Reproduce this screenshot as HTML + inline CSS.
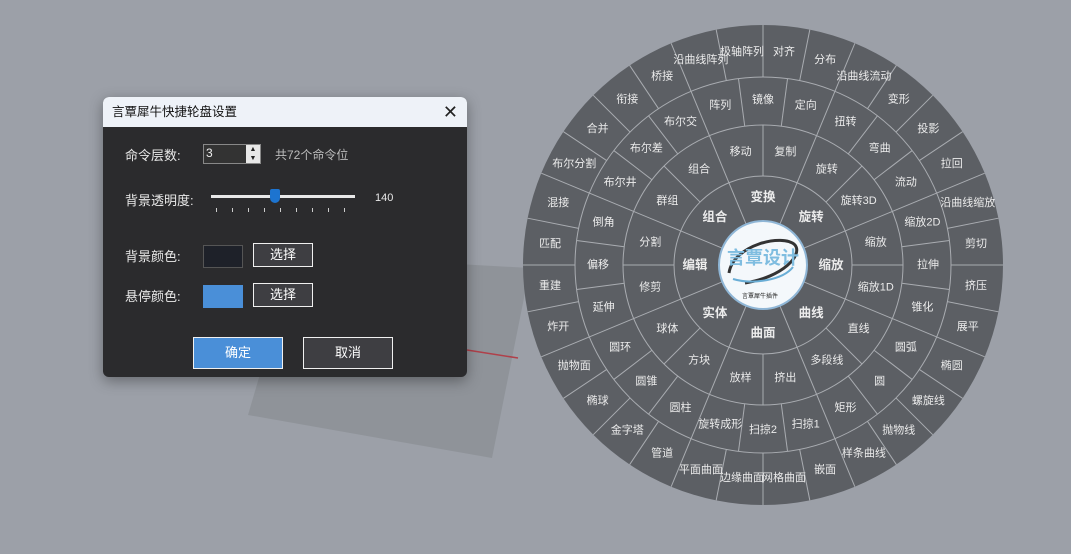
<!DOCTYPE html>
<html><head><meta charset="utf-8"><style>
body{margin:0;width:1071px;height:554px;overflow:hidden;background:#9ca0a8;font-family:"Liberation Sans","Noto Sans CJK SC",sans-serif;position:relative}
.dlg{position:absolute;left:103px;top:97px;width:364px;height:280px;background:#2b2b2d;border-radius:6px;overflow:hidden;box-shadow:0 4px 14px rgba(0,0,0,.35)}
.tb{height:30px;background:#eef2f8;color:#111;font-size:12.5px;line-height:30px;padding-left:9px;position:relative}
.x{position:absolute;right:9px;top:0;font-size:18px;color:#222}
.lbl{position:absolute;color:#e8e8e8;font-size:13px}
.btn{position:absolute;border:1.5px solid #f0f0f0;background:#3e3e42;color:#fff;font-size:13px;text-align:center;box-sizing:border-box}
</style></head><body>
<svg width="1071" height="554" style="position:absolute;left:0;top:0">
<polygon points="295,255 530,268 492,458 248,415" fill="#8f9399"/>
<line x1="467" y1="350" x2="518" y2="358" stroke="#b0404a" stroke-width="1.5"/>
<g transform="translate(763,265)" stroke="#a9acb1" stroke-width="1" fill="none">
<circle r="240" fill="#5c5f64" stroke="none"/>
<circle r="188"/><circle r="140"/><circle r="89"/>
<g id="l4"><line x1="0" y1="-188" x2="0" y2="-240"/></g>
<use href="#l4" transform="rotate(11.25)"/><use href="#l4" transform="rotate(22.5)"/><use href="#l4" transform="rotate(33.75)"/><use href="#l4" transform="rotate(45)"/><use href="#l4" transform="rotate(56.25)"/><use href="#l4" transform="rotate(67.5)"/><use href="#l4" transform="rotate(78.75)"/><use href="#l4" transform="rotate(90)"/><use href="#l4" transform="rotate(101.25)"/><use href="#l4" transform="rotate(112.5)"/><use href="#l4" transform="rotate(123.75)"/><use href="#l4" transform="rotate(135)"/><use href="#l4" transform="rotate(146.25)"/><use href="#l4" transform="rotate(157.5)"/><use href="#l4" transform="rotate(168.75)"/><use href="#l4" transform="rotate(180)"/><use href="#l4" transform="rotate(191.25)"/><use href="#l4" transform="rotate(202.5)"/><use href="#l4" transform="rotate(213.75)"/><use href="#l4" transform="rotate(225)"/><use href="#l4" transform="rotate(236.25)"/><use href="#l4" transform="rotate(247.5)"/><use href="#l4" transform="rotate(258.75)"/><use href="#l4" transform="rotate(270)"/><use href="#l4" transform="rotate(281.25)"/><use href="#l4" transform="rotate(292.5)"/><use href="#l4" transform="rotate(303.75)"/><use href="#l4" transform="rotate(315)"/><use href="#l4" transform="rotate(326.25)"/><use href="#l4" transform="rotate(337.5)"/><use href="#l4" transform="rotate(348.75)"/>
<g id="l3"><line x1="0" y1="-140" x2="0" y2="-188" transform="rotate(7.5)"/></g>
<use href="#l3" transform="rotate(15)"/><use href="#l3" transform="rotate(30)"/><use href="#l3" transform="rotate(45)"/><use href="#l3" transform="rotate(60)"/><use href="#l3" transform="rotate(75)"/><use href="#l3" transform="rotate(90)"/><use href="#l3" transform="rotate(105)"/><use href="#l3" transform="rotate(120)"/><use href="#l3" transform="rotate(135)"/><use href="#l3" transform="rotate(150)"/><use href="#l3" transform="rotate(165)"/><use href="#l3" transform="rotate(180)"/><use href="#l3" transform="rotate(195)"/><use href="#l3" transform="rotate(210)"/><use href="#l3" transform="rotate(225)"/><use href="#l3" transform="rotate(240)"/><use href="#l3" transform="rotate(255)"/><use href="#l3" transform="rotate(270)"/><use href="#l3" transform="rotate(285)"/><use href="#l3" transform="rotate(300)"/><use href="#l3" transform="rotate(315)"/><use href="#l3" transform="rotate(330)"/><use href="#l3" transform="rotate(345)"/>
<g id="l2"><line x1="0" y1="-89" x2="0" y2="-140"/></g>
<use href="#l2" transform="rotate(22.5)"/><use href="#l2" transform="rotate(45)"/><use href="#l2" transform="rotate(67.5)"/><use href="#l2" transform="rotate(90)"/><use href="#l2" transform="rotate(112.5)"/><use href="#l2" transform="rotate(135)"/><use href="#l2" transform="rotate(157.5)"/><use href="#l2" transform="rotate(180)"/><use href="#l2" transform="rotate(202.5)"/><use href="#l2" transform="rotate(225)"/><use href="#l2" transform="rotate(247.5)"/><use href="#l2" transform="rotate(270)"/><use href="#l2" transform="rotate(292.5)"/><use href="#l2" transform="rotate(315)"/><use href="#l2" transform="rotate(337.5)"/>
<g id="l1"><line x1="0" y1="-44" x2="0" y2="-89" transform="rotate(22.5)"/></g>
<use href="#l1" transform="rotate(45)"/><use href="#l1" transform="rotate(90)"/><use href="#l1" transform="rotate(135)"/><use href="#l1" transform="rotate(180)"/><use href="#l1" transform="rotate(225)"/><use href="#l1" transform="rotate(270)"/><use href="#l1" transform="rotate(315)"/>
<circle r="44" fill="#f4f8fb" stroke="#8fb6d6" stroke-width="2"/>
<path d="M-34,8 C-30,-20 20,-32 32,-20 C40,-10 20,12 -18,18" stroke="#333" stroke-width="3"/>
<path d="M-30,14 C-10,20 20,15 30,2" stroke="#6aaed6" stroke-width="2"/>
</g>
<g fill="#ececec" font-size="11" text-anchor="middle" dominant-baseline="central" font-family="Liberation Sans,Noto Sans CJK SC,sans-serif">
<g font-size="12.5" font-weight="bold">
<text transform="translate(763,265) rotate(0) translate(0,-68) rotate(0)">变换</text>
<text transform="translate(763,265) rotate(45) translate(0,-68) rotate(-45)">旋转</text>
<text transform="translate(763,265) rotate(90) translate(0,-68) rotate(-90)">缩放</text>
<text transform="translate(763,265) rotate(135) translate(0,-68) rotate(-135)">曲线</text>
<text transform="translate(763,265) rotate(180) translate(0,-68) rotate(-180)">曲面</text>
<text transform="translate(763,265) rotate(225) translate(0,-68) rotate(-225)">实体</text>
<text transform="translate(763,265) rotate(270) translate(0,-68) rotate(-270)">编辑</text>
<text transform="translate(763,265) rotate(315) translate(0,-68) rotate(-315)">组合</text>
</g>
<text transform="translate(763,265) rotate(11.25) translate(0,-115) rotate(-11.25)">复制</text>
<text transform="translate(763,265) rotate(33.75) translate(0,-115) rotate(-33.75)">旋转</text>
<text transform="translate(763,265) rotate(56.25) translate(0,-115) rotate(-56.25)">旋转3D</text>
<text transform="translate(763,265) rotate(78.75) translate(0,-115) rotate(-78.75)">缩放</text>
<text transform="translate(763,265) rotate(101.25) translate(0,-115) rotate(-101.25)">缩放1D</text>
<text transform="translate(763,265) rotate(123.75) translate(0,-115) rotate(-123.75)">直线</text>
<text transform="translate(763,265) rotate(146.25) translate(0,-115) rotate(-146.25)">多段线</text>
<text transform="translate(763,265) rotate(168.75) translate(0,-115) rotate(-168.75)">挤出</text>
<text transform="translate(763,265) rotate(191.25) translate(0,-115) rotate(-191.25)">放样</text>
<text transform="translate(763,265) rotate(213.75) translate(0,-115) rotate(-213.75)">方块</text>
<text transform="translate(763,265) rotate(236.25) translate(0,-115) rotate(-236.25)">球体</text>
<text transform="translate(763,265) rotate(258.75) translate(0,-115) rotate(-258.75)">修剪</text>
<text transform="translate(763,265) rotate(281.25) translate(0,-115) rotate(-281.25)">分割</text>
<text transform="translate(763,265) rotate(303.75) translate(0,-115) rotate(-303.75)">群组</text>
<text transform="translate(763,265) rotate(326.25) translate(0,-115) rotate(-326.25)">组合</text>
<text transform="translate(763,265) rotate(348.75) translate(0,-115) rotate(-348.75)">移动</text>
<text transform="translate(763,265) rotate(0) translate(0,-165) rotate(0)">镜像</text>
<text transform="translate(763,265) rotate(15) translate(0,-165) rotate(-15)">定向</text>
<text transform="translate(763,265) rotate(30) translate(0,-165) rotate(-30)">扭转</text>
<text transform="translate(763,265) rotate(45) translate(0,-165) rotate(-45)">弯曲</text>
<text transform="translate(763,265) rotate(60) translate(0,-165) rotate(-60)">流动</text>
<text transform="translate(763,265) rotate(75) translate(0,-165) rotate(-75)">缩放2D</text>
<text transform="translate(763,265) rotate(90) translate(0,-165) rotate(-90)">拉伸</text>
<text transform="translate(763,265) rotate(105) translate(0,-165) rotate(-105)">锥化</text>
<text transform="translate(763,265) rotate(120) translate(0,-165) rotate(-120)">圆弧</text>
<text transform="translate(763,265) rotate(135) translate(0,-165) rotate(-135)">圆</text>
<text transform="translate(763,265) rotate(150) translate(0,-165) rotate(-150)">矩形</text>
<text transform="translate(763,265) rotate(165) translate(0,-165) rotate(-165)">扫掠1</text>
<text transform="translate(763,265) rotate(180) translate(0,-165) rotate(-180)">扫掠2</text>
<text transform="translate(763,265) rotate(195) translate(0,-165) rotate(-195)">旋转成形</text>
<text transform="translate(763,265) rotate(210) translate(0,-165) rotate(-210)">圆柱</text>
<text transform="translate(763,265) rotate(225) translate(0,-165) rotate(-225)">圆锥</text>
<text transform="translate(763,265) rotate(240) translate(0,-165) rotate(-240)">圆环</text>
<text transform="translate(763,265) rotate(255) translate(0,-165) rotate(-255)">延伸</text>
<text transform="translate(763,265) rotate(270) translate(0,-165) rotate(-270)">偏移</text>
<text transform="translate(763,265) rotate(285) translate(0,-165) rotate(-285)">倒角</text>
<text transform="translate(763,265) rotate(300) translate(0,-165) rotate(-300)">布尔井</text>
<text transform="translate(763,265) rotate(315) translate(0,-165) rotate(-315)">布尔差</text>
<text transform="translate(763,265) rotate(330) translate(0,-165) rotate(-330)">布尔交</text>
<text transform="translate(763,265) rotate(345) translate(0,-165) rotate(-345)">阵列</text>
<text transform="translate(763,265) rotate(5.625) translate(0,-214) rotate(-5.625)">对齐</text>
<text transform="translate(763,265) rotate(16.875) translate(0,-214) rotate(-16.875)">分布</text>
<text transform="translate(763,265) rotate(28.125) translate(0,-214) rotate(-28.125)">沿曲线流动</text>
<text transform="translate(763,265) rotate(39.375) translate(0,-214) rotate(-39.375)">变形</text>
<text transform="translate(763,265) rotate(50.625) translate(0,-214) rotate(-50.625)">投影</text>
<text transform="translate(763,265) rotate(61.875) translate(0,-214) rotate(-61.875)">拉回</text>
<text transform="translate(763,265) rotate(73.125) translate(0,-214) rotate(-73.125)">沿曲线缩放</text>
<text transform="translate(763,265) rotate(84.375) translate(0,-214) rotate(-84.375)">剪切</text>
<text transform="translate(763,265) rotate(95.625) translate(0,-214) rotate(-95.625)">挤压</text>
<text transform="translate(763,265) rotate(106.875) translate(0,-214) rotate(-106.875)">展平</text>
<text transform="translate(763,265) rotate(118.125) translate(0,-214) rotate(-118.125)">椭圆</text>
<text transform="translate(763,265) rotate(129.375) translate(0,-214) rotate(-129.375)">螺旋线</text>
<text transform="translate(763,265) rotate(140.625) translate(0,-214) rotate(-140.625)">抛物线</text>
<text transform="translate(763,265) rotate(151.875) translate(0,-214) rotate(-151.875)">样条曲线</text>
<text transform="translate(763,265) rotate(163.125) translate(0,-214) rotate(-163.125)">嵌面</text>
<text transform="translate(763,265) rotate(174.375) translate(0,-214) rotate(-174.375)">网格曲面</text>
<text transform="translate(763,265) rotate(185.625) translate(0,-214) rotate(-185.625)">边缘曲面</text>
<text transform="translate(763,265) rotate(196.875) translate(0,-214) rotate(-196.875)">平面曲面</text>
<text transform="translate(763,265) rotate(208.125) translate(0,-214) rotate(-208.125)">管道</text>
<text transform="translate(763,265) rotate(219.375) translate(0,-214) rotate(-219.375)">金字塔</text>
<text transform="translate(763,265) rotate(230.625) translate(0,-214) rotate(-230.625)">椭球</text>
<text transform="translate(763,265) rotate(241.875) translate(0,-214) rotate(-241.875)">抛物面</text>
<text transform="translate(763,265) rotate(253.125) translate(0,-214) rotate(-253.125)">炸开</text>
<text transform="translate(763,265) rotate(264.375) translate(0,-214) rotate(-264.375)">重建</text>
<text transform="translate(763,265) rotate(275.625) translate(0,-214) rotate(-275.625)">匹配</text>
<text transform="translate(763,265) rotate(286.875) translate(0,-214) rotate(-286.875)">混接</text>
<text transform="translate(763,265) rotate(298.125) translate(0,-214) rotate(-298.125)">布尔分割</text>
<text transform="translate(763,265) rotate(309.375) translate(0,-214) rotate(-309.375)">合并</text>
<text transform="translate(763,265) rotate(320.625) translate(0,-214) rotate(-320.625)">衔接</text>
<text transform="translate(763,265) rotate(331.875) translate(0,-214) rotate(-331.875)">桥接</text>
<text transform="translate(763,265) rotate(343.125) translate(0,-214) rotate(-343.125)">沿曲线阵列</text>
<text transform="translate(763,265) rotate(354.375) translate(0,-214) rotate(-354.375)">极轴阵列</text>
<text x="763" y="258" fill="#7fbde0" font-size="18" font-weight="bold">言覃设计</text>
<text x="760" y="297" fill="#222" font-size="6">言覃犀牛插件</text>
</g>
</svg>

<div class="dlg">
<div class="tb">言覃犀牛快捷轮盘设置<span class="x">✕</span></div>
<div class="lbl" style="left:22px;top:48px">命令层数:</div>
<div style="position:absolute;left:100px;top:47px;width:58px;height:20px;border:1px solid #888;background:#333;box-sizing:border-box;color:#eee;font-size:12px;padding-left:2px;line-height:16px">3
<div style="position:absolute;right:0;top:0;width:14px;height:18px;background:#e8e8e8;color:#222;font-size:7px;line-height:9px;text-align:center">▲<br>▼</div></div>
<div class="lbl" style="left:172px;top:49px;font-size:12px;color:#bbb">共72个命令位</div>
<div class="lbl" style="left:22px;top:93px">背景透明度:</div>
<div style="position:absolute;left:108px;top:98px;width:144px;height:3px;background:#e8e8e8"></div>
<div style="position:absolute;left:167px;top:92px;width:10px;height:14px;background:#1d74d0;border-radius:2px 2px 5px 5px"></div>
<div style="position:absolute;left:113px;top:111px;width:134px;height:4px;background:repeating-linear-gradient(90deg,#ccc 0 1px,transparent 1px 16px)"></div>
<div class="lbl" style="left:272px;top:95px;font-size:11px">140</div>
<div class="lbl" style="left:22px;top:149px">背景颜色:</div>
<div style="position:absolute;left:100px;top:148px;width:40px;height:23px;background:#1e2129;border:1px solid #555;box-sizing:border-box"></div>
<div class="btn" style="left:150px;top:146px;width:60px;height:24px;line-height:21px">选择</div>
<div class="lbl" style="left:22px;top:189px">悬停颜色:</div>
<div style="position:absolute;left:100px;top:188px;width:40px;height:23px;background:#4a8fd8"></div>
<div class="btn" style="left:150px;top:186px;width:60px;height:24px;line-height:21px">选择</div>
<div class="btn" style="left:90px;top:240px;width:90px;height:32px;line-height:29px;background:#4a8fd8">确定</div>
<div class="btn" style="left:200px;top:240px;width:90px;height:32px;line-height:29px">取消</div>
</div>
</body></html>
